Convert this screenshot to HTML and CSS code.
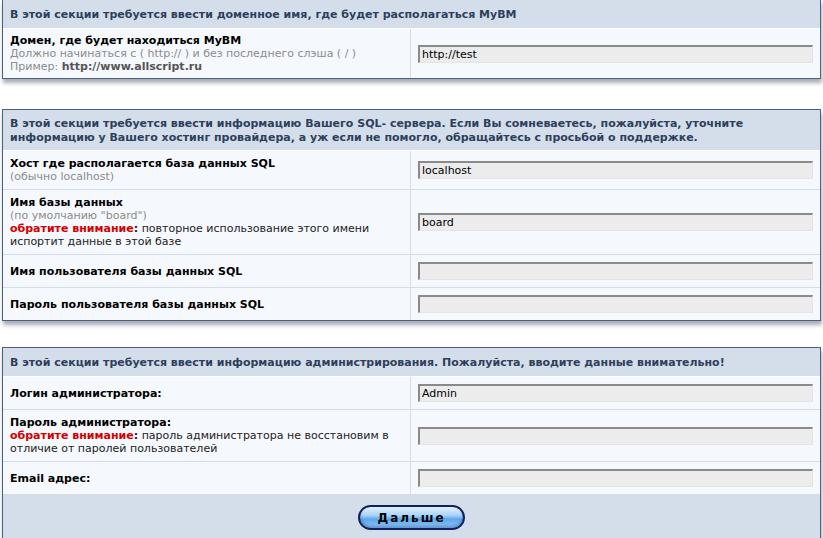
FILE: index.html
```html
<!DOCTYPE html>
<html lang="ru">
<head>
<meta charset="utf-8">
<title>MyBM install</title>
<link rel="stylesheet" href="styles.css">
</head>
<body>
<div class="page">
  <section class="box box-first">
    <div class="head">В этой секции требуется ввести доменное имя, где будет располагаться MyBM</div>
    <div class="row row-tight">
      <div class="label">
        <div class="title">Домен, где будет находиться MyBM</div>
        <div class="hint">Должно начинаться с ( http:// ) и без последнего слэша ( / )</div>
        <div class="hint">Пример: <b class="ex">http://www.allscript.ru</b></div>
      </div>
      <div class="field"><input class="inp" type="text" value="http://test"></div>
    </div>
  </section>

  <section class="box box-second">
    <div class="head">В этой секции требуется ввести информацию Вашего SQL- сервера. Если Вы сомневаетесь, пожалуйста, уточните информацию у Вашего хостинг провайдера, а уж если не помогло, обращайтесь с просьбой о поддержке.</div>
    <div class="row">
      <div class="label">
        <div class="title">Хост где располагается база данных SQL</div>
        <div class="hint">(обычно localhost)</div>
      </div>
      <div class="field"><input class="inp" type="text" value="localhost"></div>
    </div>
    <div class="row">
      <div class="label">
        <div class="title">Имя базы данных</div>
        <div class="hint">(по умолчанию "board")</div>
        <div class="note"><b><span class="warn">обратите внимание</span>:</b> повторное использование этого имени испортит данные в этой базе</div>
      </div>
      <div class="field"><input class="inp" type="text" value="board"></div>
    </div>
    <div class="row">
      <div class="label"><div class="title">Имя пользователя базы данных SQL</div></div>
      <div class="field"><input class="inp" type="text" value=""></div>
    </div>
    <div class="row">
      <div class="label"><div class="title">Пароль пользователя базы данных SQL</div></div>
      <div class="field"><input class="inp" type="password" value=""></div>
    </div>
  </section>

  <section class="box box-third">
    <div class="head">В этой секции требуется ввести информацию администрирования. Пожалуйста, вводите данные внимательно!</div>
    <div class="row">
      <div class="label"><div class="title">Логин администратора:</div></div>
      <div class="field"><input class="inp" type="text" value="Admin"></div>
    </div>
    <div class="row">
      <div class="label">
        <div class="title">Пароль администратора:</div>
        <div class="note"><b><span class="warn">обратите внимание</span>:</b> пароль администратора не восстановим в отличие от паролей пользователей</div>
      </div>
      <div class="field"><input class="inp" type="password" value=""></div>
    </div>
    <div class="row">
      <div class="label"><div class="title">Email адрес:</div></div>
      <div class="field"><input class="inp" type="text" value=""></div>
    </div>
    <div class="foot"><button class="btn" type="button">Дальше</button></div>
  </section>
</div>
</body>
</html>
```

FILE: styles.css
```css
* { box-sizing: border-box; }
html, body { margin: 0; padding: 0; background: #ffffff; }
body {
  font-family: "DejaVu Sans", Verdana, sans-serif;
  font-size: 11px;
  color: #000;
  overflow: hidden;
}
.page {
  display: flex;
  flex-direction: column;
  padding: 0 2px;
  width: 823px;
}
.box {
  width: 819px;
  border: 1px solid #4a5f82;
  background: #f5f8fc;
  box-shadow: 1px 4px 4px rgba(60, 70, 90, 0.45);
}
.box-first { margin-top: -1px; }
.box-second { margin-top: 30px; }
.box-third { margin-top: 26px; }
.head {
  background: #d3deea;
  color: #2e3f5c;
  font-weight: bold;
  font-size: 11px;
  line-height: 13px;
  padding: 8px 7px 7px 7px;
  border-bottom: 1px solid #ffffff;
}
.box-second .head { padding: 7px 7px 6px 7px; line-height: 13.5px; }
.row {
  display: grid;
  grid-template-columns: 408px 1fr;
  border-bottom: 1px solid #d4dce7;
}
.row:last-child { border-bottom: 0; }
.label {
  padding: 6px 7px;
  line-height: 13px;
  border-right: 1px solid #d4dce7;
  display: flex;
  flex-direction: column;
  justify-content: center;
}
.row-tight .label { padding: 5px 7px; }
.title { font-weight: bold; color: #000; }
.hint { font-size: 11px; color: #8c8c8c; }
.hint .ex { color: #555; }
.note { color: #222; }
.warn { color: #d40000; }
.field {
  padding: 7px;
  display: flex;
  align-items: center;
}
.inp {
  width: 395px;
  height: 18px;
  margin: 0;
  padding: 1px 2px;
  font-family: "DejaVu Sans", Verdana, sans-serif;
  font-size: 11px;
  color: #000;
  background: #ececec;
  border-style: solid;
  border-width: 2px 1px 1px 2px;
  border-color: #8a8a8a #e4e4e4 #e4e4e4 #8a8a8a;
  outline: none;
}
.foot {
  background: #d3deea;
  border-top: 1px solid #d4dce7;
  display: flex;
  justify-content: center;
  padding: 9px 0 8px 0;
}
.btn {
  width: 107px;
  height: 25px;
  border-radius: 13px;
  border: 2px solid #14205a;
  background: linear-gradient(#e2f1ff 0%, #a9d3f8 40%, #5fa6ea 58%, #8fcbfc 100%);
  font-family: "DejaVu Sans", Verdana, sans-serif;
  font-weight: bold;
  font-size: 12px;
  letter-spacing: 2px;
  color: #000;
  padding: 0;
  box-shadow: inset 0 -2px 3px rgba(20, 40, 120, 0.35);
}
```
